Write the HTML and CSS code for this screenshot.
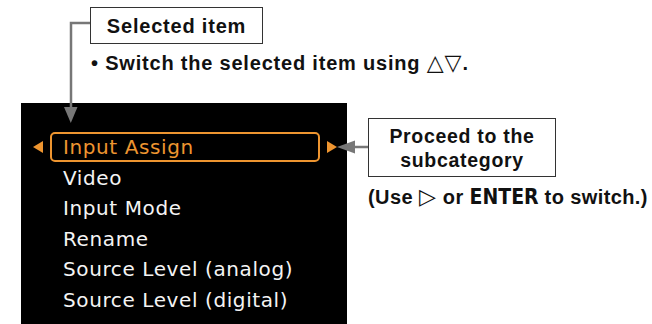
FILE: index.html
```html
<!DOCTYPE html>
<html lang="en">
<head>
    <meta charset="UTF-8">
    <meta name="viewport" content="width=device-width, initial-scale=1.0">
    <title>Input Assign - Menu</title>
    <link rel="stylesheet" href="styles.css">
</head>
<body>

    <div class="page">
        <div class="label-row">
            <div class="label-box">Selected item</div>
        </div>

        <p class="note">&bull; Switch the selected item using <span class="sym">&#9651;&#9661;</span>.</p>

        <div class="stage">
            <ul class="menu">
                <li class="menu-item selected">Input Assign</li>
                <li class="menu-item">Video</li>
                <li class="menu-item">Input Mode</li>
                <li class="menu-item">Rename</li>
                <li class="menu-item">Source Level (analog)</li>
                <li class="menu-item">Source Level (digital)</li>
            </ul>

            <div class="side">
                <div class="proceed-box">Proceed to the<br>subcategory</div>
                <p class="hint">(Use <span class="sym">&#9655;</span> or <span class="key">ENTER</span> to switch.)</p>
            </div>
        </div>

        <!-- leader lines -->
        <svg class="leaders" width="652" height="324" viewBox="0 0 652 324">
            <path d="M90 23 H71 V108" fill="none" stroke="#777" stroke-width="2.5"/>
            <polygon points="64,107 77.5,107 70.8,123" fill="#777"/>
            <path d="M368 147 H353" fill="none" stroke="#777" stroke-width="2.5"/>
            <polygon points="355,140.5 355,153.5 337,147" fill="#777"/>
        </svg>
    </div>

</body>
</html>
```

FILE: styles.css
```css
* {
    margin: 0;
    padding: 0;
    box-sizing: border-box;
}

body {
    font-family: 'Liberation Sans', Arial, sans-serif;
    background-color: #fff;
    color: #111;
    width: 652px;
    height: 324px;
    overflow: hidden;
}

.page {
    position: relative;
    width: 652px;
    height: 324px;
}

.label-row {
    padding: 7px 0 0 90px;
}

.label-box {
    width: 173px;
    height: 37px;
    padding-top: 7px;
    border: 1px solid #333;
    text-align: center;
    font-size: 20px;
    line-height: 23px;
    font-weight: bold;
    letter-spacing: 0.8px;
}

.note {
    margin: 8px 0 0 91px;
    font-size: 20px;
    line-height: 23px;
    font-weight: bold;
    letter-spacing: 0.8px;
}

.sym {
    font-family: 'DejaVu Sans', sans-serif;
    font-weight: normal;
    font-size: 22px;
    line-height: 1;
    letter-spacing: 1px;
}

.stage {
    display: flex;
    margin-top: 28px;
}

.menu {
    flex-shrink: 0;
    list-style: none;
    width: 326px;
    height: 221px;
    margin-left: 21px;
    padding: 29px 0 0 29px;
    background-color: #000;
    font-family: 'DejaVu Sans', sans-serif;
    font-size: 20px;
    letter-spacing: 0.6px;
    color: #f4f4f4;
}

.menu-item {
    position: relative;
    width: 270px;
    height: 30.5px;
    line-height: 30.5px;
    padding-left: 13px;
}

.menu-item.selected {
    line-height: 26.5px;
    height: 30px;
    margin-bottom: 0.5px;
    padding-left: 11px;
    border: 2px solid #ee9530;
    border-radius: 5px;
    color: #ee9530;
}

.menu-item.selected::before,
.menu-item.selected::after {
    content: "";
    position: absolute;
    top: 7px;
    border-top: 6px solid transparent;
    border-bottom: 6px solid transparent;
}

.menu-item.selected::before {
    left: -19px;
    border-right: 10px solid #ee9530;
}

.menu-item.selected::after {
    right: -19px;
    border-left: 10px solid #ee9530;
}

.side {
    flex-shrink: 0;
    margin: 15px 0 0 21px;
}

.proceed-box {
    width: 188px;
    height: 59px;
    padding-top: 5px;
    border: 1px solid #333;
    text-align: center;
    font-size: 19.5px;
    line-height: 24px;
    font-weight: bold;
    letter-spacing: 0.7px;
}

.hint {
    margin-top: 9px;
    font-size: 20px;
    line-height: 23px;
    font-weight: bold;
    letter-spacing: 0.4px;
    white-space: nowrap;
}

.key {
    font-family: 'DejaVu Sans Condensed', 'Liberation Sans', sans-serif;
    font-size: 21px;
    letter-spacing: 0;
}

.leaders {
    position: absolute;
    top: 0;
    left: 0;
    pointer-events: none;
}
```
